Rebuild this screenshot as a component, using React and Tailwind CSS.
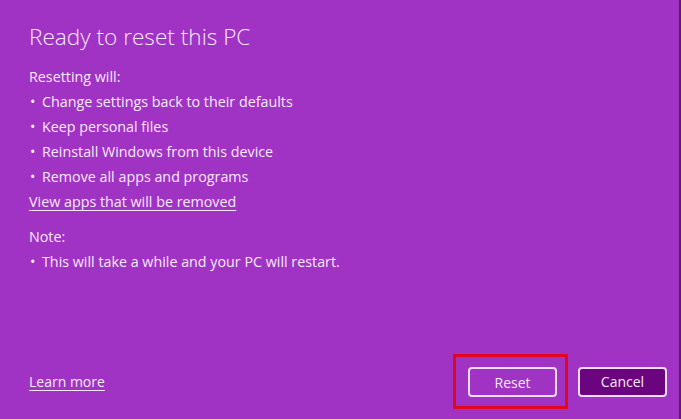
export default function App() {
    const items = [
        'Change settings back to their defaults',
        'Keep personal files',
        'Reinstall Windows from this device',
        'Remove all apps and programs',
    ]

    return (
        <div
            className="flex h-[419px] w-[681px] overflow-hidden bg-[#a133c4] text-[#f6e9fb]"
            style={{ fontFamily: '"Open Sans", "Noto Sans", sans-serif' }}
        >
            <div className="flex flex-1 flex-col pl-[29px] pr-[12px] pt-[21px] pb-[10px]">
                <h1 className="text-[22.6px] font-light leading-[32px]">Ready to reset this PC</h1>

                <p className="mt-[11px] text-[14.3px] leading-[25px]">Resetting will:</p>
                <ul className="text-[14.3px] leading-[25px]">
                    {items.map((item) => (
                        <li key={item} className="flex">
                            <span className="w-[13px] pl-[1px]">•</span>
                            <span>{item}</span>
                        </li>
                    ))}
                </ul>
                <a href="#" className="self-start text-[14.3px] leading-[25px] underline underline-offset-[3px]">
                    View apps that will be removed
                </a>

                <p className="mt-[10px] text-[14.3px] leading-[25px]">Note:</p>
                <div className="flex text-[14.3px] leading-[25px]">
                    <span className="w-[13px] pl-[1px]">•</span>
                    <span>This will take a while and your PC will restart.</span>
                </div>

                <div className="mt-auto flex items-center justify-between">
                    <a href="#" className="text-[14px] underline underline-offset-[3px]">
                        Learn more
                    </a>
                    <div className="flex items-center gap-[10px]">
                        <div className="border-[3px] border-[#e3061f] pb-[9px] pl-[12px] pr-[8px] pt-[10px]">
                            <button className="h-[30px] w-[89px] rounded-[4px] border-2 border-[#f3dcf9] text-[14px]">
                                Reset
                            </button>
                        </div>
                        <button className="h-[30px] w-[89px] rounded-[4px] border-2 border-[#f3dcf9] bg-[#6b047f] text-[14px]">
                            Cancel
                        </button>
                    </div>
                </div>
            </div>
            <div className="w-[2px] bg-[#5e1a70]" />
        </div>
    )
}
